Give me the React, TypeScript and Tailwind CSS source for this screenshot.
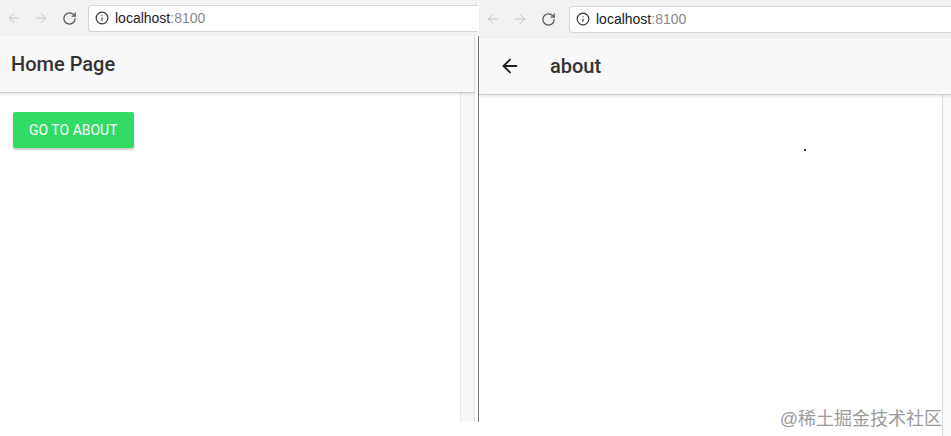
import React from "react";
import { ArrowLeft, ArrowRight, RotateCw, Info } from "lucide-react";

function BrowserBar({ height, urlLeft }: { height: string; urlLeft: string }) {
  return (
    <div className={`flex items-center bg-[#f2f2f2] ${height}`}>
      <div className="flex items-center gap-[11px] pl-[6px] text-[#c4c4c4]">
        <ArrowLeft size={16} strokeWidth={1.5} />
        <ArrowRight size={16} strokeWidth={1.5} />
        <RotateCw size={15} strokeWidth={2} className="ml-[2px] text-[#555]" />
      </div>
      <div
        className={`flex h-[27px] flex-1 items-center gap-[6px] rounded-l-[4px] border border-r-0 border-[#d6d6d6] bg-white pl-[6px] ${urlLeft}`}
      >
        <Info size={14} strokeWidth={2} className="text-[#333]" />
        <span className="text-[14px] text-[#222] font-['Liberation_Sans',sans-serif]">
          localhost<span className="text-[#888]">:8100</span>
        </span>
      </div>
    </div>
  );
}

function Scrollbar() {
  return <div className="w-[15px] border-x border-[#e6e6e6] bg-[#f7f7f7]" />;
}

export default function App() {
  return (
    <div className="flex h-[436px] w-[951px] bg-white font-['Roboto',sans-serif]">
      {/* left window */}
      <div className="flex w-[478px] flex-col">
        <BrowserBar height="h-[36px]" urlLeft="ml-[11px]" />
        <div className="z-10 mr-[3px] flex h-[57px] items-center border-r border-b border-[#dcdcdc] border-b-[#cfcfcf] bg-[#f8f8f8] pl-[11px] shadow-[0_1px_3px_rgba(0,0,0,0.12)]">
          <h1 className="text-[20px] font-medium text-[#333]">Home Page</h1>
        </div>
        <div className="flex h-[329px] pr-[3px]">
          <div className="flex-1 pl-[13px] pt-[19px]">
            <button className="h-[36px] rounded-[2px] bg-[#32db64] px-[16px] text-[14px] uppercase text-white shadow-[0_2px_2px_rgba(0,0,0,0.2)]">
              Go to About
            </button>
          </div>
          <Scrollbar />
        </div>
      </div>

      <div className="mt-[36px] h-[386px] w-px bg-[#777]" />

      {/* right window */}
      <div className="flex flex-1 flex-col">
        <BrowserBar height="h-[38px]" urlLeft="ml-[13px]" />
        <div className="z-10 flex h-[57px] items-center border-b border-[#cfcfcf] bg-[#f8f8f8] pl-[20px] shadow-[0_1px_3px_rgba(0,0,0,0.12)]">
          <ArrowLeft size={22} strokeWidth={2} className="text-[#222]" />
          <h1 className="ml-[29px] text-[20px] font-medium text-[#333]">about</h1>
        </div>
        <div className="flex flex-1">
          <div className="flex flex-1 flex-col">
            <div className="ml-[325px] mt-[54px] h-[2px] w-[2px] bg-[#444]" />
            <div className="flex-1" />
            <div className="mb-[3px] self-end pr-[0px] text-[18px] text-[#9a9a9a] font-['Liberation_Sans','Noto_Sans_CJK_SC',sans-serif]">
              @稀土掘金技术社区
            </div>
          </div>
          <div className="w-[9px] border-l border-[#dedede] bg-[#f9f9f9]" />
        </div>
      </div>
    </div>
  );
}
